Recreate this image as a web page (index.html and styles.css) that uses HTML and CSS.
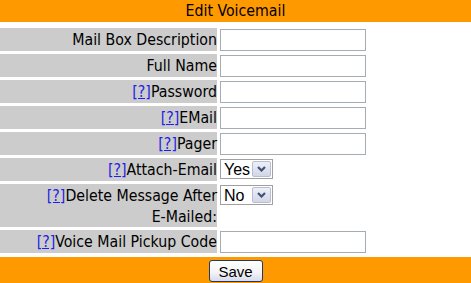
FILE: index.html
```html
<!DOCTYPE html>
<html>
<head>
    <meta charset="UTF-8" />
    <title>Edit Voicemail</title>
    <link rel="stylesheet" href="styles.css">
</head>
<body>
    <div class="title">Edit Voicemail</div>
    <form class="form">
        <div class="label">Mail Box Description</div>
        <div class="value"><input type="text" class="text" /></div>

        <div class="label">Full Name</div>
        <div class="value"><input type="text" class="text" /></div>

        <div class="label"><a href="javascript:;" class="help">[?]</a>Password</div>
        <div class="value"><input type="password" class="text" /></div>

        <div class="label"><a href="javascript:;" class="help">[?]</a>EMail</div>
        <div class="value"><input type="text" class="text" /></div>

        <div class="label"><a href="javascript:;" class="help">[?]</a>Pager</div>
        <div class="value"><input type="text" class="text" /></div>

        <div class="label"><a href="javascript:;" class="help">[?]</a>Attach-Email</div>
        <div class="value">
            <span class="select">
                <select><option>Yes</option><option>No</option></select>
                <span class="arrow">
                    <svg width="9" height="6" viewBox="0 0 9 6"><path d="M1 1 L4.5 4.5 L8 1" fill="none" stroke="#3f5177" stroke-width="2.2"/></svg>
                </span>
            </span>
        </div>

        <div class="label multi"><a href="javascript:;" class="help">[?]</a>Delete Message After<br>E-Mailed:</div>
        <div class="value">
            <span class="select">
                <select><option>No</option><option>Yes</option></select>
                <span class="arrow">
                    <svg width="9" height="6" viewBox="0 0 9 6"><path d="M1 1 L4.5 4.5 L8 1" fill="none" stroke="#3f5177" stroke-width="2.2"/></svg>
                </span>
            </span>
        </div>

        <div class="label"><a href="javascript:;" class="help">[?]</a>Voice Mail Pickup Code</div>
        <div class="value"><input type="text" class="text" /></div>
    </form>
    <div class="footer">
        <button type="button" class="save">Save</button>
    </div>
</body>
</html>
```

FILE: styles.css
```css
body {
    margin: 0;
    font-family: "DejaVu Sans Condensed", "DejaVu Sans", sans-serif;
    font-stretch: condensed;
    font-size: 15.75px;
    color: #000;
    background: #fff;
}

.title {
    height: 22px;
    line-height: 22px;
    text-align: center;
    background: #ff9900;
}

.form {
    display: grid;
    grid-template-columns: 217px 1fr;
    column-gap: 2px;
    row-gap: 3px;
    margin: 6px 0 4px;
}

.label {
    background: #cccccc;
    text-align: right;
    line-height: 22px;
    padding-top: 1px;
    min-height: 22px;
}

.label.multi {
    line-height: 21px;
}

.help {
    color: #1f1fe6;
    text-decoration: underline;
}

.value {
    padding-left: 1px;
}

.text {
    box-sizing: border-box;
    width: 146px;
    height: 22px;
    margin: 1px 0 0;
    padding: 1px 3px;
    border: 1px solid #a5acb2;
    font-family: inherit;
    font-size: 14px;
    background: #fff;
}

.select {
    display: inline-flex;
    align-items: stretch;
    box-sizing: border-box;
    width: 53px;
    height: 20px;
    margin-top: 1px;
    border: 1px solid #a0a0a0;
    background: #fff;
}

.select select {
    appearance: none;
    -webkit-appearance: none;
    flex: 1;
    min-width: 0;
    border: none;
    outline: none;
    padding: 0 0 0 3px;
    margin: 0;
    font-family: "Liberation Sans", sans-serif;
    font-size: 16px;
    color: #000;
    background: #fff;
}

.arrow {
    display: flex;
    align-items: center;
    justify-content: center;
    width: 17px;
    margin: 1px;
    border: 1px solid #b9bdd1;
    border-radius: 2px;
    background: linear-gradient(#eef0f8, #d2d6e6);
}

.footer {
    height: 27px;
    padding-top: 3px;
    box-sizing: border-box;
    text-align: center;
    background: #ff9900;
}

.save {
    width: 54px;
    height: 22px;
    padding: 0;
    border: 1px solid #1c3b6e;
    border-radius: 3px;
    font-family: "Liberation Sans", sans-serif;
    font-size: 15px;
    color: #000;
    background: linear-gradient(#ffffff 0%, #f4f4f8 55%, #dadaea 100%);
}
```
